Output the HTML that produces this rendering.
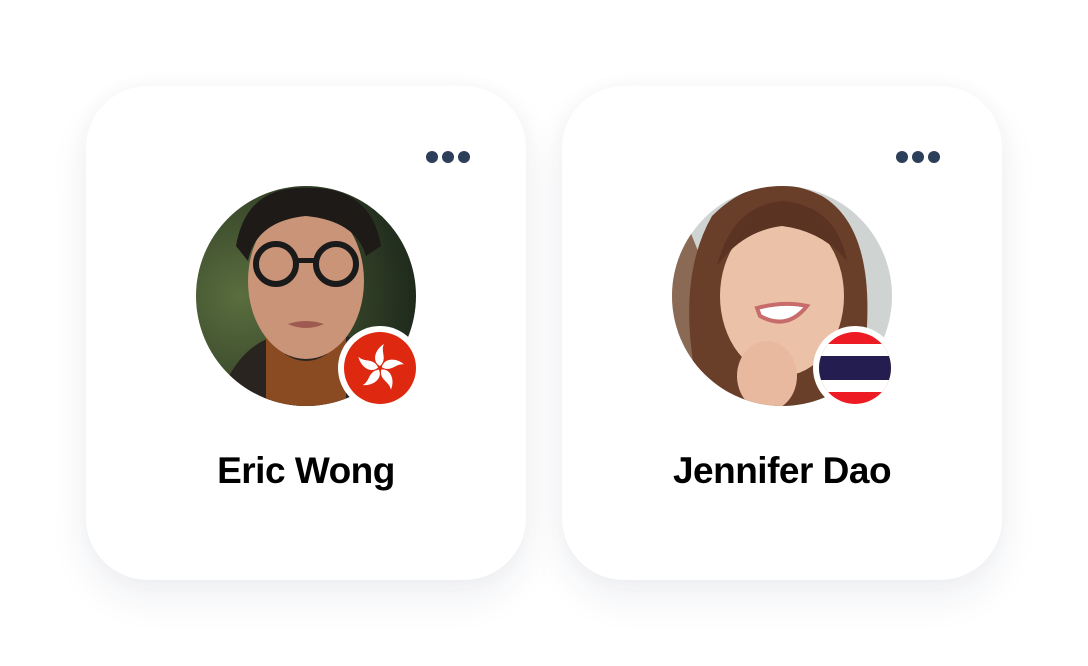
<!DOCTYPE html>
<html><head><style>
body{margin:0;width:1088px;height:666px;background:#fff;position:relative;overflow:hidden;font-family:"Liberation Sans",sans-serif}
.card{position:absolute;top:86px;width:440px;height:494px;background:#fff;border-radius:62px;box-shadow:0 18px 40px rgba(30,40,80,0.07),0 0 20px rgba(30,40,80,0.03)}
.dots{position:absolute;top:151px;display:flex;gap:4px}
.dots i{width:12px;height:12px;border-radius:50%;background:#2d3e5a;display:block}
.av{position:absolute;top:186px;width:220px;height:220px;border-radius:50%;overflow:hidden}
.flag{position:absolute;width:84px;height:84px;border-radius:50%;background:#fff}
.name{position:absolute;top:450px;width:440px;text-align:center;font-size:37px;font-weight:bold;color:#000;letter-spacing:-0.5px}
</style></head><body>
<div class="card" style="left:86px"></div>
<div class="card" style="left:562px"></div>
<div class="dots" style="left:426px"><i></i><i></i><i></i></div>
<div class="dots" style="left:896px"><i></i><i></i><i></i></div>

<div class="av" style="left:196px">
<svg width="220" height="220" viewBox="0 0 220 220">
<defs><radialGradient id="bg1" cx="0.2" cy="0.5" r="0.8"><stop offset="0" stop-color="#5a6e3e"/><stop offset="1" stop-color="#1f2a1c"/></radialGradient></defs>
<rect width="220" height="220" fill="url(#bg1)"/>
<path d="M20 220 Q40 160 80 150 L150 150 Q190 160 210 220Z" fill="#2a2420"/>
<path d="M70 150 Q110 200 150 150 L150 220 L70 220Z" fill="#8a4a22"/>
<ellipse cx="110" cy="95" rx="58" ry="78" fill="#c99478"/>
<path d="M40 60 Q50 0 110 2 Q175 0 185 60 L170 70 Q160 35 110 30 Q60 35 52 75Z" fill="#1e1a17"/>
<circle cx="80" cy="78" r="20" fill="none" stroke="#1a1a1a" stroke-width="6"/>
<circle cx="140" cy="78" r="20" fill="none" stroke="#1a1a1a" stroke-width="6"/>
<rect x="98" y="72" width="24" height="5" fill="#1a1a1a"/>
<path d="M92 138 Q110 132 128 138 Q110 146 92 138Z" fill="#9e5a50"/>
</svg></div>

<div class="av" style="left:672px">
<svg width="220" height="220" viewBox="0 0 220 220">
<rect width="220" height="220" fill="#cfd4d2"/>
<path d="M0 0 L0 220 L60 220 L40 100Z" fill="#8a6a55"/>
<path d="M30 220 Q0 100 40 30 Q90 -20 150 10 Q200 40 195 140 L190 220Z" fill="#6a3f2a"/>
<ellipse cx="110" cy="110" rx="62" ry="80" fill="#ebc2a7"/>
<path d="M45 80 Q60 20 110 15 Q165 20 175 75 Q150 45 110 40 Q70 45 45 80Z" fill="#5a3322"/>
<path d="M85 122 Q112 115 135 120 Q115 145 88 130Z" fill="#fff" stroke="#c76c6a" stroke-width="4"/>
<ellipse cx="95" cy="190" rx="30" ry="35" fill="#e8b99e"/>
</svg></div>

<div class="flag" style="left:338px;top:326px">
<svg width="84" height="84" viewBox="0 0 84 84"><circle cx="42" cy="42" r="36" fill="#de2910"/>
<g fill="#fff" transform="translate(42 42)">
<path id="p" d="M0 -2 C-8 -6 -6 -18 4 -24 C0 -16 8 -10 0 -2Z"/>
<use href="#p" transform="rotate(72)"/><use href="#p" transform="rotate(144)"/><use href="#p" transform="rotate(216)"/><use href="#p" transform="rotate(288)"/>
</g></svg></div>

<div class="flag" style="left:813px;top:326px">
<svg width="84" height="84" viewBox="0 0 84 84"><defs><clipPath id="c"><circle cx="42" cy="42" r="36"/></clipPath></defs>
<g clip-path="url(#c)"><rect x="0" y="6" width="84" height="72" fill="#ed1c24"/>
<rect x="0" y="18" width="84" height="48" fill="#fff"/>
<rect x="0" y="30" width="84" height="24" fill="#241d4f"/></g></svg></div>

<div class="name" style="left:86px">Eric Wong</div>
<div class="name" style="left:562px">Jennifer Dao</div>
</body></html>
